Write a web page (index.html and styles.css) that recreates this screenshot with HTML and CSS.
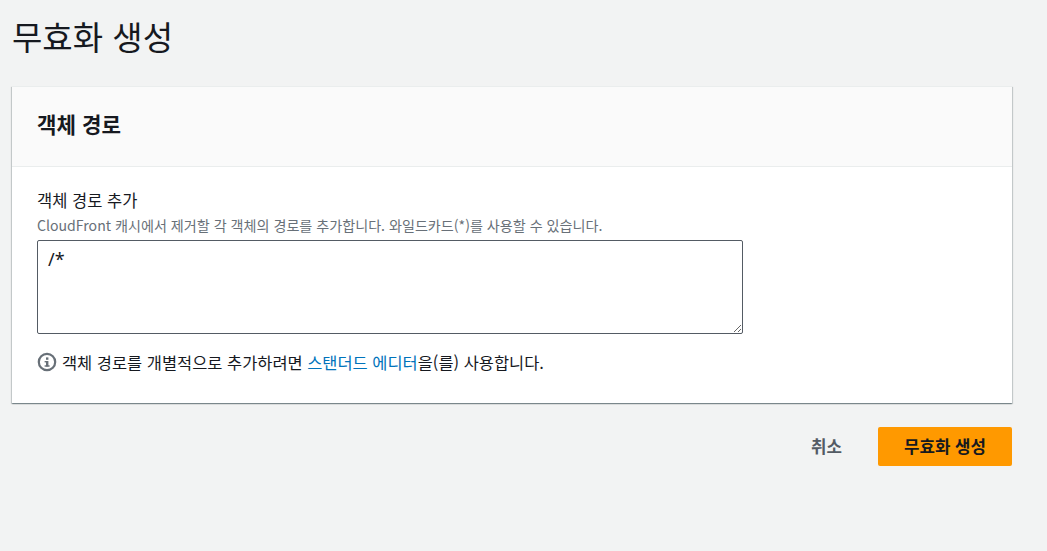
FILE: index.html
```html
<!DOCTYPE html>
<html lang="ko">
<head>
<meta charset="utf-8">
<title>무효화 생성</title>
<link rel="stylesheet" href="styles.css">
</head>
<body>
<main class="page">
  <h1 class="title">무효화 생성</h1>
  <section class="card">
    <header class="card-head"><h2>객체 경로</h2></header>
    <div class="card-body">
      <label class="label" for="paths">객체 경로 추가</label>
      <p class="desc">CloudFront 캐시에서 제거할 각 객체의 경로를 추가합니다. 와일드카드(*)를 사용할 수 있습니다.</p>
      <textarea id="paths" class="paths">/*</textarea>
      <p class="hint">
        <svg class="info" width="20" height="20" viewBox="0 0 20 20" aria-hidden="true">
          <circle cx="10" cy="10" r="8.2" fill="none" stroke="#687078" stroke-width="2.2"/>
          <rect x="9" y="9" width="2.4" height="5.5" fill="#687078"/>
          <rect x="9" y="5.4" width="2.4" height="2.4" fill="#687078"/>
          <rect x="7.6" y="9" width="2" height="1.4" fill="#687078"/>
          <rect x="7.6" y="13.3" width="5" height="1.4" fill="#687078"/>
        </svg>
        <span>객체 경로를 개별적으로 추가하려면 <a href="#">스탠더드 에디터</a>을(를) 사용합니다.</span>
      </p>
    </div>
  </section>
  <div class="actions">
    <button class="btn-link" type="button">취소</button>
    <button class="btn-primary" type="button">무효화 생성</button>
  </div>
</main>
</body>
</html>
```
FILE: styles.css
```css
html, body {
  margin: 0;
  height: 100%;
  overflow: hidden;
  background: #f2f3f3;
}
body {
  font-family: "Noto Sans CJK KR", "Noto Sans", sans-serif;
  color: #16191f;
}
.page {
  width: 1000px;
  padding: 0 0 0 12px;
}
.title {
  margin: 0;
  padding-top: 14px;
  height: 87px;
  box-sizing: border-box;
  font-size: 33px;
  line-height: 44px;
  font-weight: 400;
}
.card {
  background: #fff;
  box-shadow: 0 1px 1px 0 rgba(0, 28, 36, .3), 1px 1px 1px 0 rgba(0, 28, 36, .15), -1px 1px 1px 0 rgba(0, 28, 36, .15);
  border-top: 1px solid #eaeded;
  margin-top: -1px;
}
.card-head {
  padding: 0 25px 7px;
  height: 72px;
  display: flex;
  align-items: center;
  background: #fafafa;
  border-bottom: 1px solid #eaeded;
}
.card-head h2 {
  margin: 0;
  font-size: 21.2px;
  font-weight: 700;
}
.card-body {
  padding: 22px 25px 20px;
  height: 236px;
  box-sizing: border-box;
}
.label {
  display: block;
  font-size: 16.5px;
  line-height: 22px;
}
.desc {
  margin: 5px 0 6px;
  font-size: 14.1px;
  line-height: 18px;
  color: #687078;
}
.paths {
  display: block;
  box-sizing: border-box;
  width: 706px;
  height: 94px;
  margin: 0;
  padding: 6px 10px;
  border: 1px solid #545b64;
  border-radius: 2px;
  font-family: "Noto Sans", sans-serif;
  font-size: 18px;
  line-height: 24px;
  color: #16191f;
  background: #fff;
  outline: none;
}
.hint {
  display: flex;
  align-items: center;
  gap: 5px;
  margin: 17px 0 0;
  font-size: 16.45px;
  line-height: 22px;
}
.hint a {
  color: #0073bb;
  text-decoration: none;
}
.info { flex: none; }
.actions {
  display: flex;
  justify-content: flex-end;
  align-items: center;
  gap: 36px;
  margin-top: 24px;
}
.btn-link, .btn-primary {
  border: 0;
  font-family: inherit;
  font-size: 16.8px;
  font-weight: 700;
  padding: 0 0 2px;
}
.btn-link {
  background: none;
  color: #545b64;
}
.btn-primary {
  width: 134px;
  height: 39px;
  background: #ff9900;
  color: #16191f;
  border-radius: 2px;
}
```
